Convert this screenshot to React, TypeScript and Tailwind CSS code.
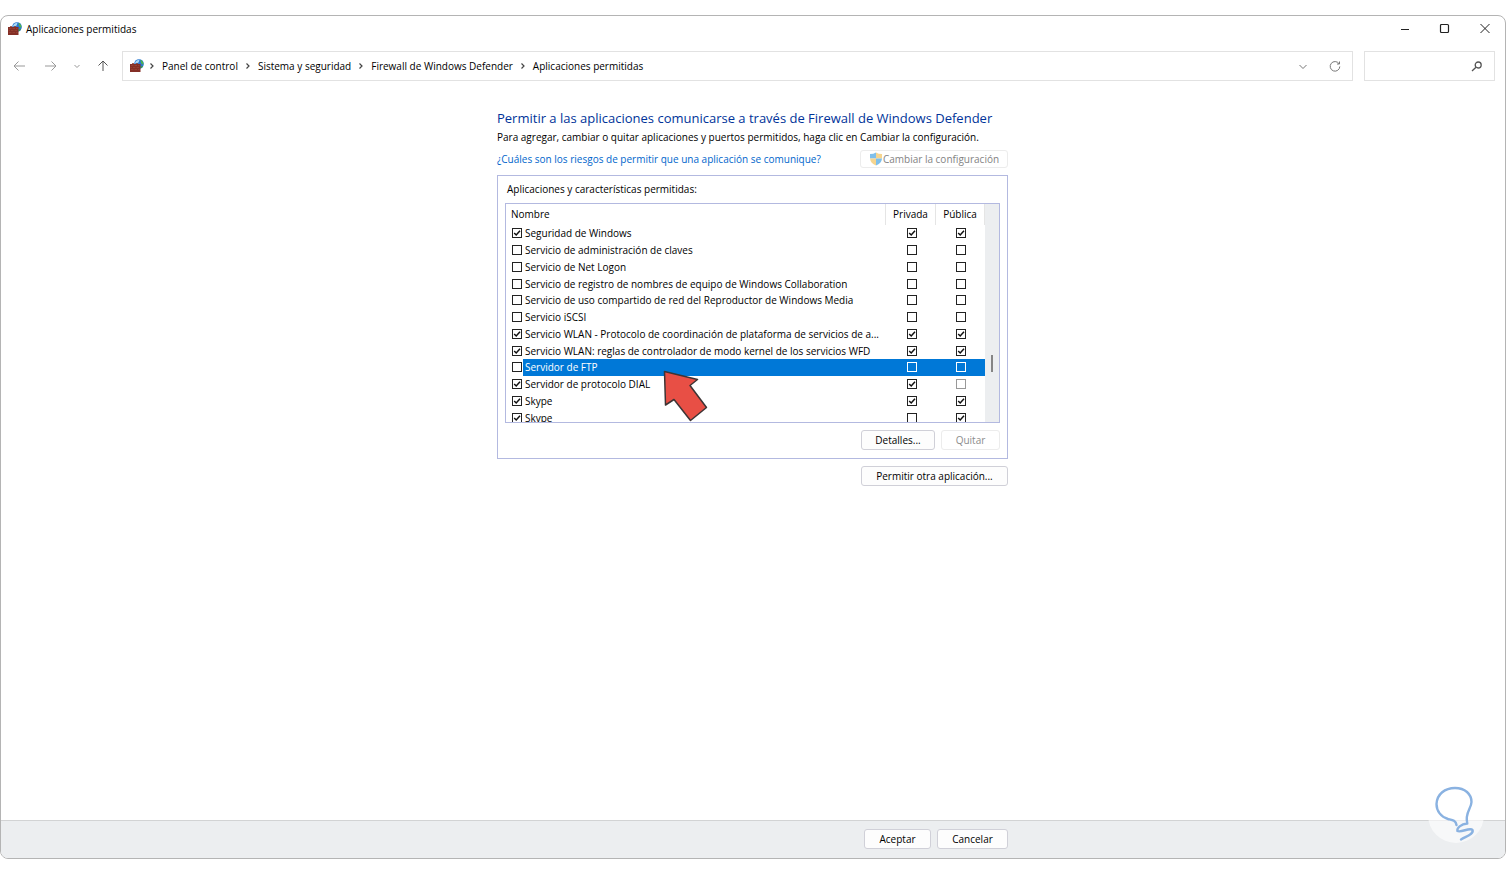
import { useState } from 'react';

type App = {
  name: string;
  enabled: boolean;
  privada: boolean;
  publica: boolean;
  locked?: boolean;
};

const initialApps: App[] = [
  { name: 'Seguridad de Windows', enabled: true, privada: true, publica: true },
  { name: 'Servicio de administración de claves', enabled: false, privada: false, publica: false },
  { name: 'Servicio de Net Logon', enabled: false, privada: false, publica: false },
  { name: 'Servicio de registro de nombres de equipo de Windows Collaboration', enabled: false, privada: false, publica: false },
  { name: 'Servicio de uso compartido de red del Reproductor de Windows Media', enabled: false, privada: false, publica: false },
  { name: 'Servicio iSCSI', enabled: false, privada: false, publica: false },
  { name: 'Servicio WLAN - Protocolo de coordinación de plataforma de servicios de a...', enabled: true, privada: true, publica: true },
  { name: 'Servicio WLAN: reglas de controlador de modo kernel de los servicios WFD', enabled: true, privada: true, publica: true },
  { name: 'Servidor de FTP', enabled: false, privada: false, publica: false },
  { name: 'Servidor de protocolo DIAL', enabled: true, privada: true, publica: false, locked: true },
  { name: 'Skype', enabled: true, privada: true, publica: true },
  { name: 'Skype', enabled: true, privada: false, publica: true },
];

const crumbs = ['Panel de control', 'Sistema y seguridad', 'Firewall de Windows Defender', 'Aplicaciones permitidas'];

function FirewallIcon() {
  return (
    <svg viewBox="0 0 14 14" className="h-3.5 w-3.5 shrink-0" aria-hidden="true">
      <circle cx="9" cy="5" r="4.8" fill="#2a78d0" />
      <path d="M4.800 4Q6.500 .8 9.500 .8Q9.500 3 7 5Z" fill="#a9d8f7" />
      <path d="M10.500 .8Q13.500 2.200 13.500 5.500Q12 6 11 3.800Z" fill="#4fb54a" />
      <path d="M10.500 7L13 7Q12 9 10.500 9.500Z" fill="#3c9a45" />
      <path d="M0 5H2V4.200H4V5H6V4.200H8V5H10.500V13H0Z" fill="#842f26" />
      <path d="M1 6.500H3.500M4.500 6.500H7M8 6.500H9.500M.5 8.500H2M3 8.500H5.500M6.500 8.500H9M1 10.500H3.500M4.500 10.500H7M8 10.500H9.500" stroke="#a04a3b" strokeWidth=".6" />
    </svg>
  );
}

function ShieldIcon() {
  return (
    <svg viewBox="0 0 14 14" className="h-3.5 w-3.5 shrink-0" aria-hidden="true">
      <path d="M7 .5Q4.500 2 1 2V6.500H7Z" fill="#7fbfea" />
      <path d="M7 .5Q9.500 2 13 2V6.500H7Z" fill="#f6d58f" />
      <path d="M1 6.500Q1.500 11.500 7 13.500V6.500Z" fill="#f6d58f" />
      <path d="M13 6.500Q12.500 11.500 7 13.500V6.500Z" fill="#7fbfea" />
    </svg>
  );
}

function Crumb({ label }: { label: string }) {
  return (
    <>
      <svg viewBox="0 0 20 10" className="h-2.5 w-5" fill="none" stroke="#444" strokeWidth="1.2" aria-hidden="true">
        <path d="M8.500 2.500L11 5L8.500 7.500" />
      </svg>
      <a href="#" className="whitespace-nowrap">{label}</a>
    </>
  );
}

type CheckProps = {
  label: string;
  checked: boolean;
  onChange: () => void;
  light?: boolean;
  disabled?: boolean;
};

function Check({ label, checked, onChange, light, disabled }: CheckProps) {
  const border = disabled ? 'border-[#999]' : light ? 'border-white' : 'border-[#222]';
  return (
    <span className="relative block h-2.5 w-2.5 shrink-0">
      <input
        type="checkbox"
        aria-label={label}
        checked={checked}
        disabled={disabled}
        onChange={onChange}
        className={`block h-2.5 w-2.5 appearance-none border ${border}`}
      />
      {checked && (
        <svg viewBox="0 0 10 10" className="pointer-events-none absolute inset-0" fill="none" stroke="#111" strokeWidth="1.500" aria-hidden="true">
          <path d="M2.200 5L4.200 7L8 2.800" />
        </svg>
      )}
    </span>
  );
}

const button = 'h-5 rounded-[3px] border border-[#d0d0d8] bg-[#fdfdfd] text-center leading-4';

export default function AllowedApps() {
  const [apps, setApps] = useState(initialApps);
  const [selected, setSelected] = useState(8);

  const toggle = (index: number, key: 'enabled' | 'privada' | 'publica') => {
    setApps(apps.map((app, i) => (i === index ? { ...app, [key]: !app[key] } : app)));
  };

  return (
    <div className="flex min-h-screen flex-col bg-white pt-[15px] pb-4 font-['Open_Sans',sans-serif] text-[10px] text-black">
      <div className="relative flex flex-1 flex-col overflow-hidden rounded-lg border border-[#b4b4b4]">
        <header className="flex h-[26px] items-center pl-[7px]">
          <FirewallIcon />
          <h1 className="ml-1 flex-1">Aplicaciones permitidas</h1>
          <div className="flex">
            <button aria-label="Minimizar" className="flex w-10 justify-center">
              <svg viewBox="0 0 12 12" className="h-3 w-3" stroke="#222" fill="none"><path d="M2 6.500H10" /></svg>
            </button>
            <button aria-label="Maximizar" className="flex w-10 justify-center">
              <svg viewBox="0 0 12 12" className="h-3 w-3" stroke="#222" fill="none" strokeWidth="1.200"><rect x="1.500" y="1.500" width="8" height="8" rx="1" /></svg>
            </button>
            <button aria-label="Cerrar" className="flex w-10 justify-center">
              <svg viewBox="0 0 12 12" className="h-3 w-3" stroke="#222" fill="none"><path d="M1.500 1L10.500 10M10.500 1L1.500 10" /></svg>
            </button>
          </div>
        </header>

        <nav className="mt-[9px] flex items-center pr-2.5">
          <div className="flex w-[121px] items-center text-[#999]">
            <button aria-label="Atrás" className="ml-3">
              <svg viewBox="0 0 12 12" className="h-3 w-3" stroke="currentColor" fill="none"><path d="M12 6H1M5.500 1.500L1 6L5.500 10.500" /></svg>
            </button>
            <button aria-label="Adelante" className="ml-5">
              <svg viewBox="0 0 12 12" className="h-3 w-3" stroke="currentColor" fill="none"><path d="M0 6H11M6.500 1.500L11 6L6.500 10.500" /></svg>
            </button>
            <button aria-label="Ubicaciones recientes" className="ml-[14px]">
              <svg viewBox="0 0 12 12" className="h-3 w-3" stroke="currentColor" fill="none"><path d="M3.500 5L6 7.500L8.500 5" /></svg>
            </button>
            <button aria-label="Subir" className="ml-[14px] text-[#555]">
              <svg viewBox="0 0 12 12" className="h-3 w-3" stroke="currentColor" fill="none"><path d="M6 11V1M1.500 5.500L6 1L10.500 5.500" /></svg>
            </button>
          </div>
          <div className="flex h-[30px] flex-1 items-center border border-[#e2e2e2] pl-[7px]">
            <FirewallIcon />
            <div className="-ml-0.5 flex items-center">
              {crumbs.map((label) => (
                <Crumb key={label} label={label} />
              ))}
            </div>
            <button aria-label="Historial" className="ml-auto">
              <svg viewBox="0 0 12 12" className="h-3 w-3" stroke="#777" fill="none"><path d="M2.500 5L6 8.500L9.500 5" /></svg>
            </button>
            <button aria-label="Actualizar" className="mr-[11px] ml-5">
              <svg viewBox="0 0 12 12" className="h-3 w-3" stroke="#777" fill="none"><path d="M10 3.700A4.800 4.800 0 1 0 10.800 6.500M10.500 1.500V4H8" /></svg>
            </button>
          </div>
          <label className="ml-[11px] flex h-[30px] w-[131px] items-center border border-[#e2e2e2] pr-[11px]">
            <input type="text" aria-label="Buscar" className="min-w-0 flex-1 px-2 outline-none" />
            <svg viewBox="0 0 12 12" className="h-3 w-3" stroke="#555" strokeWidth="1.300" fill="none" aria-hidden="true">
              <circle cx="7.200" cy="5" r="3" />
              <path d="M5 7.200L1 11" />
            </svg>
          </label>
        </nav>

        <main className="mx-auto mt-7 w-[512px] flex-1 pr-px">
          <h2 className="text-[13px] leading-[18px] whitespace-nowrap text-[#003399]">
            Permitir a las aplicaciones comunicarse a través de Firewall de Windows Defender
          </h2>
          <p className="mt-0.5 leading-[17px] whitespace-nowrap">
            Para agregar, cambiar o quitar aplicaciones y puertos permitidos, haga clic en Cambiar la configuración.
          </p>
          <div className="mt-1 flex items-center justify-between">
            <a href="#" className="whitespace-nowrap text-[#0066cc]">
              ¿Cuáles son los riesgos de permitir que una aplicación se comunique?
            </a>
            <button disabled className="flex h-[18px] w-[148px] items-center justify-center rounded-[3px] border border-[#ececec] whitespace-nowrap text-[#838383]">
              <ShieldIcon />
              Cambiar la configuración
            </button>
          </div>

          <section className="mt-[7px] border border-[#b3b9e0] px-[7px] pt-[5px] pb-2">
            <h3 className="ml-0.5 leading-[17px]">Aplicaciones y características permitidas:</h3>
            <div className="relative mt-[5px] flex h-[220px] border border-[#b3b9e0]">
              <div className="flex-1 overflow-hidden">
                <table className="h-[222px] w-full table-fixed border-collapse">
                  <colgroup>
                    <col className="w-[17px]" />
                    <col />
                    <col className="w-[50px]" />
                    <col className="w-[49px]" />
                  </colgroup>
                  <thead>
                    <tr className="h-[21px] text-left">
                      <th colSpan={2} className="pl-[5px] font-normal">Nombre</th>
                      <th className="border-l border-[#e5e5e5] text-center font-normal">Privada</th>
                      <th className="border-x border-[#e5e5e5] text-center font-normal">Pública</th>
                    </tr>
                  </thead>
                  <tbody className="leading-4">
                    {apps.map((app, i) => {
                      const active = i === selected;
                      const cell = active ? 'bg-[#0078d7] text-white' : '';
                      return (
                        <tr key={i} onClick={() => setSelected(i)}>
                          <td className="p-0 pl-1.5">
                            <Check label={app.name} checked={app.enabled} onChange={() => toggle(i, 'enabled')} />
                          </td>
                          <td className={`p-0 pl-0.5 whitespace-nowrap ${cell}`}>{app.name}</td>
                          <td className={`p-0 pl-[21px] ${cell}`}>
                            <Check label={`${app.name}, privada`} checked={app.privada} light={active} onChange={() => toggle(i, 'privada')} />
                          </td>
                          <td className={`p-0 pl-5 ${cell}`}>
                            <Check label={`${app.name}, pública`} checked={app.publica} light={active} disabled={app.locked} onChange={() => toggle(i, 'publica')} />
                          </td>
                        </tr>
                      );
                    })}
                  </tbody>
                </table>
              </div>
              <div className="flex w-[14px] justify-center bg-[#eceef0] pt-[151px]">
                <div className="h-[17px] w-0.5 bg-[#858585]" />
              </div>
              {/* pointer arrow over the selected row */}
              <svg viewBox="0 0 46 52" className="pointer-events-none absolute top-[166px] left-[157px] h-[52px] w-[46px]" aria-hidden="true">
                <path d="M1.500 1.500L34.500 9.500L27 15.500L43.500 37.500L27.500 50.500L11 29.500L2.500 35Z" fill="#e84f45" stroke="#3d3435" strokeWidth="1.500" strokeLinejoin="round" />
              </svg>
            </div>
            <div className="mt-[7px] flex justify-end gap-1.5">
              <button className={`${button} w-[74px]`}>Detalles...</button>
              <button disabled className="h-5 w-[59px] rounded-[3px] border border-[#ececec] leading-4 text-[#8c8c8c]">Quitar</button>
            </div>
          </section>
          <div className="mt-[7px] flex justify-end">
            <button className={`${button} w-[147px]`}>Permitir otra aplicación...</button>
          </div>
        </main>

        <footer className="border-t border-[#d2d3d4] bg-[#eceef0] pt-2 pb-[9px]">
          <div className="mx-auto flex w-[512px] justify-end gap-1.5 pr-px">
            <button className={`${button} w-[67px]`}>Aceptar</button>
            <button className={`${button} w-[71px]`}>Cancelar</button>
          </div>
        </footer>

        <svg viewBox="0 0 56 58" className="pointer-events-none absolute right-[21px] bottom-[14px] h-[58px] w-14" fill="none" aria-hidden="true">
          <circle cx="28" cy="29" r="28" fill="#fff" fillOpacity=".6" />
          <path d="M28.500 39C27.500 34 24 34 20 33C13 31 8.500 25 8.500 18C9 8 17 2 27 2C37 2 43.500 8 43.500 16C43.300 23 36.500 27 39.300 37.500C33 38 28.500 42 29.500 45C33 47 42 41 44.500 44C46 48 39 50 33 53.500" stroke="#8ab2e1" strokeWidth="2.400" strokeLinecap="round" strokeLinejoin="round" />
        </svg>
      </div>
    </div>
  );
}
